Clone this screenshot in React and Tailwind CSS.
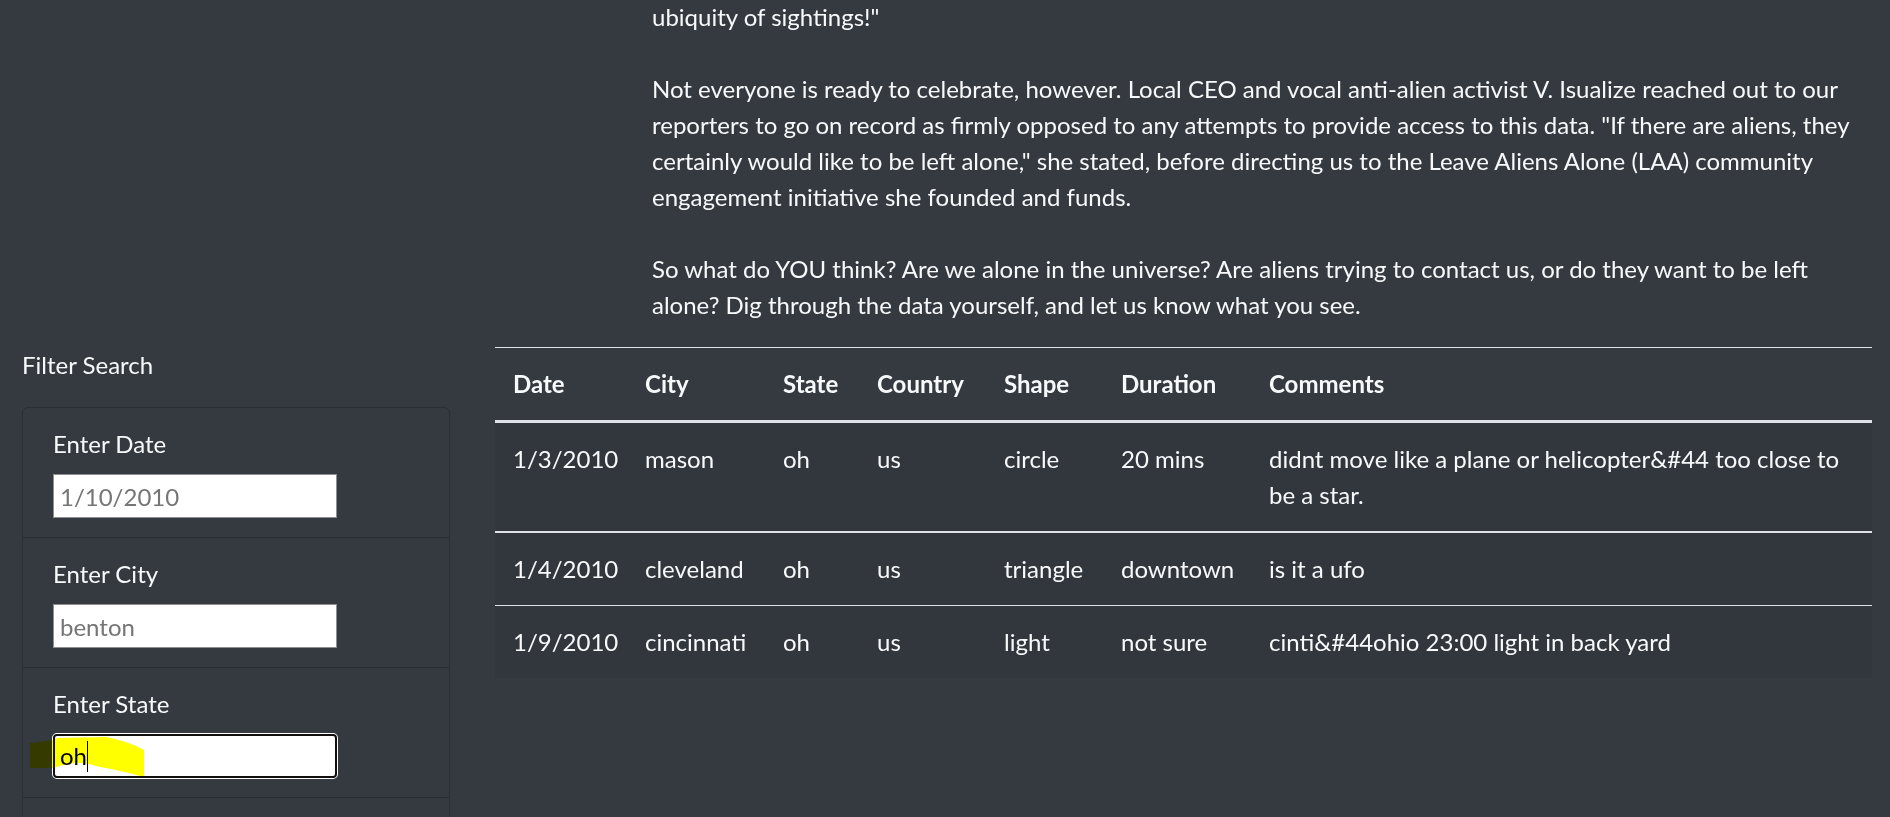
import React from "react";

// sightings filtered by the sidebar form
const sightings = [
  {
    date: "1/3/2010",
    city: "mason",
    state: "oh",
    country: "us",
    shape: "circle",
    duration: "20 mins",
    comments: ["didnt move like a plane or helicopter&#44 too close to", "be a star."],
  },
  {
    date: "1/4/2010",
    city: "cleveland",
    state: "oh",
    country: "us",
    shape: "triangle",
    duration: "downtown",
    comments: ["is it a ufo"],
  },
  {
    date: "1/9/2010",
    city: "cincinnati",
    state: "oh",
    country: "us",
    shape: "light",
    duration: "not sure",
    comments: ["cinti&#44ohio 23:00 light in back yard"],
  },
];

const columns = [
  { label: "Date", width: "w-[132px]" },
  { label: "City", width: "w-[138px]" },
  { label: "State", width: "w-[94px]" },
  { label: "Country", width: "w-[127px]" },
  { label: "Shape", width: "w-[117px]" },
  { label: "Duration", width: "w-[148px]" },
  { label: "Comments", width: "w-[621px]" },
];

const rowBorders = ["", "border-t-2 border-[#dee2e6]", "border-t border-[#dee2e6]"];

function FilterItem({ label, placeholder, first }) {
  return (
    <li className={`px-[30px] pt-[18px] pb-[19px] ${first ? "" : "border-t border-[#2b2f34]"}`}>
      <label className="block mb-[12px]">{label}</label>
      <input
        type="text"
        placeholder={placeholder}
        className="block w-[284px] h-[44px] bg-white border border-[#8f8f8f] px-[6px] text-black placeholder:text-[#757575] outline-none"
      />
    </li>
  );
}

function App() {
  return (
    <div className="relative w-full h-[817px] overflow-hidden bg-[#353a40] text-[#f8f9fa] font-['Lato',sans-serif] text-[24px] leading-[36px]">
      <div className="flex">
        {/* sidebar */}
        <aside className="w-[472px] shrink-0 px-[22px] pt-[347px]">
          <div>Filter Search</div>
          <ul className="mt-[24px] rounded-[6px] border border-[#2b2f34]">
            <FilterItem label="Enter Date" placeholder="1/10/2010" first />
            <FilterItem label="Enter City" placeholder="benton" />
            <li className="px-[30px] pt-[18px] pb-[19px] border-t border-[#2b2f34]">
              <label className="block mb-[12px]">Enter State</label>
              <div className="flex items-center w-[284px] h-[44px] bg-white border-2 border-[#101010] rounded-[4px] shadow-[0_0_0_1px_#ffffff] pl-[5px] text-black">
                <span>oh</span>
                <span className="w-[1px] h-[31px] bg-black" />
              </div>
            </li>
            {/* next field starts below the fold */}
            <li className="h-[130px] border-t border-[#2b2f34]" />
          </ul>
        </aside>

        {/* article + table */}
        <main className="flex-1 pl-[23px]">
          <div className="pl-[157px] -mt-[1px] mb-[24px] whitespace-nowrap">
            <p>ubiquity of sightings!"</p>
            <br />
            <p>
              Not everyone is ready to celebrate, however. Local CEO and vocal anti-alien activist V. Isualize reached out to our
              <br />
              reporters to go on record as firmly opposed to any attempts to provide access to this data. "If there are aliens, they
              <br />
              certainly would like to be left alone," she stated, before directing us to the Leave Aliens Alone (LAA) community
              <br />
              engagement initiative she founded and funds.
            </p>
            <br />
            <p>
              So what do YOU think? Are we alone in the universe? Are aliens trying to contact us, or do they want to be left
              <br />
              alone? Dig through the data yourself, and let us know what you see.
            </p>
          </div>

          <table className="w-[1377px] table-fixed border-separate border-spacing-0 text-left">
            <thead>
              <tr>
                {columns.map((col) => (
                  <th
                    key={col.label}
                    className={`${col.width} px-[18px] py-[18px] font-bold align-top border-t border-b-[3px] border-[#dee2e6]`}
                  >
                    {col.label}
                  </th>
                ))}
              </tr>
            </thead>
            <tbody>
              {sightings.map((s, i) => (
                <tr key={s.date} className="bg-[#32373d]">
                  {[s.date, s.city, s.state, s.country, s.shape, s.duration].map((v, j) => (
                    <td key={j} className={`px-[18px] py-[18px] align-top ${rowBorders[i]}`}>
                      {v}
                    </td>
                  ))}
                  <td className={`px-[18px] py-[18px] align-top whitespace-nowrap ${rowBorders[i]}`}>
                    {s.comments.map((line, k) => (
                      <div key={k}>{line}</div>
                    ))}
                  </td>
                </tr>
              ))}
            </tbody>
          </table>
        </main>
      </div>

      {/* highlighter mark over the state field */}
      <svg
        className="absolute left-0 top-0 pointer-events-none mix-blend-multiply"
        width="1890"
        height="817"
        viewBox="0 0 1890 817"
      >
        <path
          d="M30 743 L53 740 L56 738 L106 737 Q128 741 144 750 L144 777 Q130 773 120 771 Q108 768 100 767 Q90 764 83 763 Q72 763 67 764 Q60 766 53 768 L30 768 Z"
          fill="#ffff00"
        />
      </svg>
    </div>
  );
}

export default App;
